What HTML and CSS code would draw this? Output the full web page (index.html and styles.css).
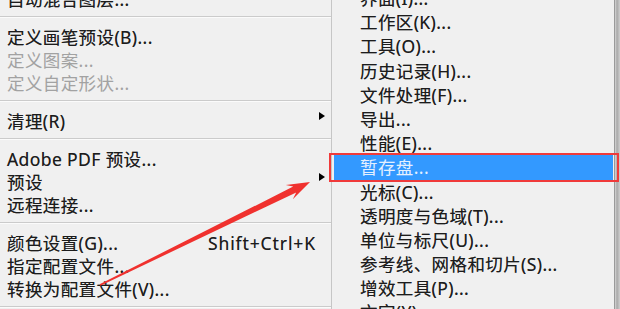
FILE: index.html
```html
<!DOCTYPE html>
<html lang="zh-CN">
<head>
    <meta charset="UTF-8">
    <title>首选项菜单</title>
    <link rel="stylesheet" href="styles.css">
</head>
<body>

    <div class="screen">

        <!-- 编辑菜单 (下半部分) -->
        <div class="menu main">
            <div class="item">自动混合图层...</div>
            <div class="sep"></div>
            <div class="item">定义画笔预设(B)...</div>
            <div class="item off">定义图案...</div>
            <div class="item off">定义自定形状...</div>
            <div class="sep"></div>
            <div class="item more">清理(R)</div>
            <div class="sep"></div>
            <div class="item">Adobe PDF 预设...</div>
            <div class="item more">预设</div>
            <div class="item">远程连接...</div>
            <div class="sep"></div>
            <div class="item"><span>颜色设置(G)...</span><span class="key">Shift+Ctrl+K</span></div>
            <div class="item">指定配置文件...</div>
            <div class="item">转换为配置文件(V)...</div>
            <div class="sep"></div>
        </div>

        <!-- 首选项子菜单 -->
        <div class="menu sub">
            <div class="item">界面(I)...</div>
            <div class="item">工作区(K)...</div>
            <div class="item">工具(O)...</div>
            <div class="item">历史记录(H)...</div>
            <div class="item">文件处理(F)...</div>
            <div class="item">导出...</div>
            <div class="item">性能(E)...</div>
            <div class="item hot">暂存盘...</div>
            <div class="item">光标(C)...</div>
            <div class="item">透明度与色域(T)...</div>
            <div class="item">单位与标尺(U)...</div>
            <div class="item">参考线、网格和切片(S)...</div>
            <div class="item">增效工具(P)...</div>
            <div class="item">文字(Y)...</div>
        </div>

        <div class="shadow"></div>

        <!-- 标注箭头 -->
        <svg class="mark" width="620" height="309" viewBox="0 0 620 309">
            <polygon fill="#f0312e" points="99.6,284.3 293.2,186.6 285.8,184.9 310,182 292.8,199.3 296.2,192.4 100.4,285.7"/>
        </svg>

    </div>

</body>
</html>
```

FILE: styles.css
```css
body {
    margin: 0;
}

.screen {
    position: relative;
    display: flex;
    width: 620px;
    height: 309px;
    overflow: hidden;
    background-color: #f0f0f0;
    font-family: "Noto Sans", "Noto Sans CJK SC", sans-serif;
    font-size: 17.5px;
    letter-spacing: 0.4px;
    color: #1c1c1c;
    text-shadow: 0 0 0.6px rgba(0, 0, 0, 0.5);
}

.menu {
    display: flex;
    flex-direction: column;
    flex-shrink: 0;
}

.menu .item,
.menu .sep {
    flex-shrink: 0;
}

/* 左边主菜单 */
.main {
    width: 331px;
    margin-top: -12.5px;
}

.main .item {
    position: relative;
    display: flex;
    justify-content: space-between;
    height: 23px;
    line-height: 23px;
    padding: 0 15px 0 7px;
    white-space: nowrap;
}

.main .key {
    letter-spacing: 0.9px;
}

/* 灰色 = 不可用 */
.main .off {
    color: #a2a2a2;
    text-shadow: none;
}

/* 子菜单小三角 */
.main .more::after {
    content: "";
    position: absolute;
    right: 6px;
    top: calc(50% - 9.5px);
    border-left: 6px solid #000;
    border-top: 4.5px solid transparent;
    border-bottom: 4.5px solid transparent;
}

.sep {
    height: 15px;
}

.sep::before {
    content: "";
    display: block;
    margin-top: 5px;
    border-top: 1px solid #cbcbcb;
    border-bottom: 1px solid #fbfbfb;
}

/* 右边子菜单 */
.sub {
    width: 282px;
    margin-top: -14px;
    border-left: 1px solid #c6c6c6;
    border-right: 1px solid #9a9a9a;
}

.sub .item {
    position: relative;
    height: 24.2px;
    line-height: 24.2px;
    padding-left: 28px;
    white-space: nowrap;
}

/* 选中项 + 红框 */
.sub .hot {
    margin: 0 1px 0 2px;
    padding-left: 26px;
    background-color: #3399ff;
    color: #e4f0ff;
    text-shadow: none;
}

.sub .hot::after {
    content: "";
    position: absolute;
    top: -2px;
    bottom: -2px;
    left: -5px;
    right: -6px;
    border: 2px solid #f03a3a;
}

.shadow {
    flex: 1;
    background: linear-gradient(to right, #d6d6d6, #a9a9a9 40%, #cfcfcf);
}

.mark {
    position: absolute;
    top: 0;
    left: 0;
}
```
